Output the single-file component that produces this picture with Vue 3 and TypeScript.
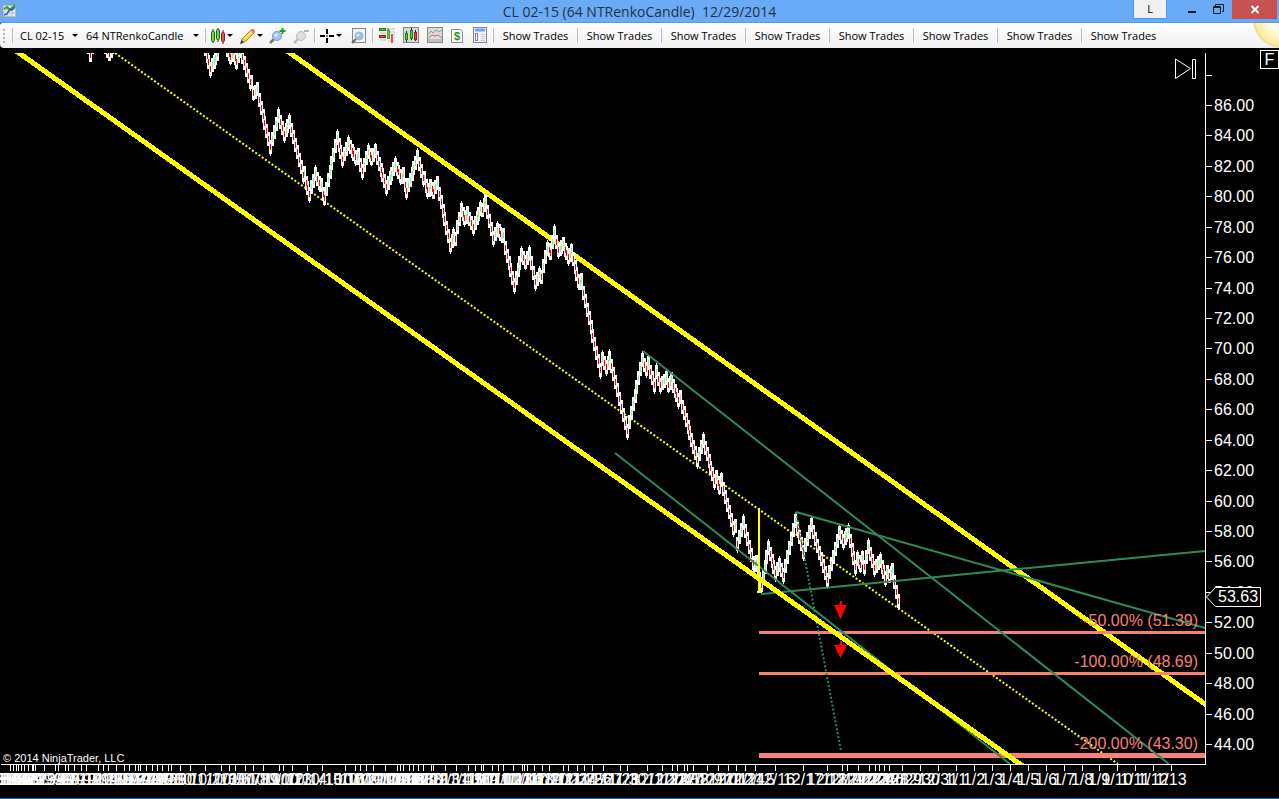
<script setup lang="ts">
type Pt = [number, number]

const title = 'CL 02-15 (64 NTRenkoCandle)\u00a0 12/29/2014'
const tradeButtons = [1, 2, 3, 4, 5, 6, 7, 8]

const runs: Pt[][] = [
  [[88, 40], [90, 62], [92, 40]],
  [[105, 40], [109, 61], [112, 40]],
  [[205, 40], [210, 78], [217, 45]],
  [
    [227, 42], [230, 65], [233, 45], [236, 70], [240, 42], [250, 91], [251, 77], [253, 101], [257, 83], [270, 156], [278, 107],
    [284, 143], [289, 113], [303, 184], [304, 168], [309, 203], [315, 165], [319, 192], [321, 182], [324, 206], [337, 129], [342, 168],
    [348, 135], [355, 166], [358, 150], [362, 180], [368, 143], [371, 166], [375, 143], [386, 196], [395, 156], [400, 185],
    [403, 169], [406, 200], [417, 148], [423, 187], [424, 173], [427, 199], [430, 180], [433, 198], [437, 176], [450, 254],
    [453, 227], [455, 245], [461, 201], [464, 227], [467, 206], [473, 236], [480, 200], [482, 215], [485, 194], [493, 247],
    [497, 221], [500, 240], [503, 232], [514, 294], [521, 246], [525, 270], [529, 245], [535, 291], [539, 266], [541, 283],
    [547, 240], [550, 259], [554, 224], [558, 259], [563, 237], [568, 266], [571, 243], [578, 290], [581, 275], [600, 379],
    [602, 350], [606, 376], [609, 349], [627, 440], [642, 351], [646, 378], [648, 356], [654, 394], [656, 363], [660, 394],
    [666, 370], [668, 393], [671, 372], [678, 409], [680, 391], [697, 469], [703, 432], [714, 490], [716, 471], [719, 495],
    [721, 472], [733, 537], [735, 520], [737, 553], [743, 514], [753, 572], [756, 557], [761, 594], [768, 539], [775, 582],
    [779, 556], [783, 584], [795, 512], [803, 561], [811, 516], [827, 589], [839, 524], [843, 550], [848, 523], [855, 576],
    [857, 550], [860, 573], [862, 550], [864, 576], [868, 538], [874, 577], [880, 552], [885, 587], [887, 565], [889, 582],
    [892, 564], [898, 610],
  ],
]

interface Bar { x: number; y: number; up: boolean }
const bars: Bar[] = []
const wicks: { x: number; y1: number; y2: number }[] = []
for (const run of runs) {
  for (let i = 0; i < run.length - 1; i++) {
    const [x0, y0] = run[i]
    const [x1, y1] = run[i + 1]
    const up = y1 < y0
    const inset = Math.min(9, Math.abs(y1 - y0) * 0.34) * (up ? -1 : 1)
    const n = Math.max(1, Math.round((x1 - x0) / 2))
    for (let k = i === 0 ? 0 : 1; k <= n; k++) {
      const t = k / n
      bars.push({ x: Math.round(x0 + (x1 - x0) * t), y: Math.round(y0 + inset + (y1 - y0 - 2 * inset) * t), up })
    }
    wicks.push({ x: x1, y1: Math.min(y1, y1 - inset), y2: Math.max(y1, y1 - inset) })
  }
}
const wickPath = wicks.map((w) => `M${w.x + 0.5} ${w.y1}V${w.y2}`).join('')
const outlinePath = bars.map((b) => `M${b.x + 0.5} ${b.y - 7}v14`).join('')
const bodyPath = (up: boolean) => bars.filter((b) => b.up === up).map((b) => `M${b.x + 0.5} ${b.y - 3}v6`).join('')

const prices = Array.from({ length: 22 }, (_, i) => ({
  label: (86 - i * 2).toFixed(2),
  y: Math.round(105 + i * 30.43),
}))

const levels = [
  { label: '-50.00% (51.39)', y: 632, h: 3 },
  { label: '-100.00% (48.69)', y: 673, h: 3 },
  { label: '-200.00% (43.30)', y: 755, h: 5 },
]

const tickXs = [
  10, 13, 16, 18, 21, 24, 28, 32, 33, 35, 44, 55, 58, 65, 68, 74, 81, 86, 98, 103, 108, 116, 124, 129, 135, 138, 140, 146, 152,
  157, 162, 168, 171, 180, 190, 205, 221, 229, 235, 245, 253, 263, 279, 283, 292, 307, 322, 345, 355, 360, 366, 373, 385, 397,
  400, 403, 409, 413, 418, 423, 431, 433, 445, 456, 468, 475, 481, 483, 492, 498, 503, 513, 522, 524, 527, 534, 542, 549, 563,
  568, 577, 584, 592, 603, 620, 627, 647, 662, 672, 677, 684, 687, 693, 707, 718, 728, 736, 745, 755, 775, 803, 827, 842, 847,
  858, 869, 875, 879, 884, 889,
]
const day = 86400000
const dates: { x: number; label: string }[] = []
const fmt = (t: number) => {
  const d = new Date(t)
  return `${d.getUTCMonth() + 1}/${d.getUTCDate()}`
}
let cursor = Date.UTC(2014, 11, 28)
for (const x of [...tickXs].reverse()) {
  dates.unshift({ x, label: fmt(cursor) })
  cursor -= day
  if (new Date(cursor).getUTCDay() === 6) cursor -= day
}
for (let i = 0; i < 16; i++) dates.push({ x: 902 + Math.round(i * 17.95), label: fmt(Date.UTC(2014, 11, 29) + i * day) })
</script>

<template>
  <div class="window">
    <header class="titlebar">
      <svg class="app-icon" width="16" height="16" viewBox="0 0 16 16">
        <rect x="1" y="2" width="13" height="12" fill="#e4e8f0" stroke="#8c93a5" />
        <path d="M1 6h13M1 10h13M5 2v12M10 2v12" stroke="#b8c0d4" />
        <path d="M2 6l3-2 3 3 5-5" fill="none" stroke="#2ba82b" stroke-width="2" />
        <path d="M2 12l3-1 3-5 2 1 3-3" fill="none" stroke="#2860b8" stroke-width="1.5" />
      </svg>
      <h1>{{ title }}</h1>
      <div class="controls">
        <button class="link-btn">L</button>
        <button class="win-btn" aria-label="Minimize">
          <svg width="26" height="19" viewBox="0 0 26 19"><path d="M8 12h8" stroke="#1e1e1e" stroke-width="2" /></svg>
        </button>
        <button class="win-btn" aria-label="Restore">
          <svg width="26" height="19" viewBox="0 0 26 19" fill="none" stroke="#1e1e1e">
            <path d="M9.500 6V4.500h8v7H16" /><path d="M7.500 6.500h7v7h-7zM7 7.500h8" />
          </svg>
        </button>
        <button class="close-btn" aria-label="Close">
          <svg width="45" height="19" viewBox="0 0 45 19"><path d="M19.500 6l7 7M26.500 6l-7 7" stroke="#fff" stroke-width="2" /></svg>
        </button>
      </div>
    </header>

    <nav class="toolbar">
      <span class="grip"></span>
      <span class="sep"></span>
      <label class="combo instrument">
        <select aria-label="Instrument"><option>CL 02-15</option></select>
        <span class="caret"></span>
      </label>
      <label class="combo interval">
        <select aria-label="Interval"><option>64 NTRenkoCandle</option></select>
        <span class="caret"></span>
      </label>
      <span class="sep"></span>
      <button class="tool menu" aria-label="Chart style">
        <svg width="16" height="16" viewBox="0 0 16 16">
          <path d="M3 1v14M8 0v14M13 2v14" stroke="#222" />
          <rect x="1.500" y="3.500" width="3" height="10" rx="1" fill="#5fe03c" stroke="#1c641c" />
          <rect x="6.500" y="1.500" width="3" height="10" rx="1" fill="#5fe03c" stroke="#1c641c" />
          <rect x="11.500" y="4.500" width="3" height="9" rx="1" fill="#f05050" stroke="#8c1919" />
        </svg>
        <span class="caret"></span>
      </button>
      <button class="tool menu" aria-label="Drawing tools">
        <svg width="16" height="16" viewBox="0 0 16 16">
          <path d="M1 15l2-5 8-8q2-1 3 0t0 3l-8 8z" fill="#ffd348" stroke="#b8821d" />
          <path d="M4 11l8-8" stroke="#fff3a1" />
          <path d="M10.500 2.500L12 1l3 3-1.500 1.500z" fill="#e87770" />
          <path d="M0 16l1.500-4 2.500 2.500z" fill="#39342d" />
        </svg>
        <span class="caret"></span>
      </button>
      <button class="tool zoom" aria-label="Zoom in">
        <svg width="18" height="16" viewBox="0 0 18 16">
          <path d="M1 15l4-4" stroke="#777" stroke-width="2.500" />
          <circle cx="8" cy="8" r="4.500" fill="#9bc9ef" stroke="#8a98a8" />
          <circle cx="7" cy="7" r="1.500" fill="#e2f3ff" />
          <path d="M13.500 0v6M10.500 3h6" stroke="#12a525" stroke-width="2" />
        </svg>
      </button>
      <button class="tool zoom" aria-label="Zoom out">
        <svg width="18" height="16" viewBox="0 0 18 16">
          <path d="M1 15l4-4" stroke="#bbb" stroke-width="2.500" />
          <circle cx="8" cy="8" r="4.500" fill="#dedede" stroke="#bdbdbd" />
          <path d="M11 3h5" stroke="#b6b6b6" stroke-width="2" />
        </svg>
      </button>
      <span class="sep"></span>
      <button class="tool menu" aria-label="Crosshair">
        <svg width="16" height="16" viewBox="0 0 16 16">
          <path d="M8 1v5M8 10v5M1 8h5M10 8h5" stroke="#000" stroke-width="2" /><path d="M7 8h2" stroke="#000" />
        </svg>
        <span class="caret"></span>
      </button>
      <button class="tool data-box" aria-label="Data box">
        <svg width="16" height="16" viewBox="0 0 16 16">
          <rect x="1.500" y=".5" width="13" height="14" fill="#f2f2f2" stroke="#888" />
          <path d="M1 15l4-4" stroke="#666" stroke-width="2" />
          <circle cx="8" cy="8" r="4" fill="#92c1ea" stroke="#a8b4c0" />
          <circle cx="7" cy="7" r="1.500" fill="#d6edff" />
        </svg>
      </button>
      <span class="sep"></span>
      <div class="panels">
        <button class="tool" aria-label="Chart trader">
          <svg width="18" height="17" viewBox="0 0 18 17">
            <path d="M10 2h7M10 5h7M10 8h7M10 11h7M10 14h7M2 6h6M2 13h6" stroke="#bbb" />
            <rect x="1.500" y="1.500" width="6" height="2" fill="#4bd22e" stroke="#247b17" />
            <rect x="1.500" y="8.500" width="6" height="2" fill="#f04040" stroke="#a81a1a" />
            <path d="M10 1v11" stroke="#165f12" />
            <rect x="9.500" y="3.500" width="2" height="8" fill="#4bd22e" stroke="#47a83a" />
            <rect x="13.500" y="7.500" width="1" height="8" fill="#f04040" stroke="#e05454" />
          </svg>
        </button>
        <button class="tool" aria-label="Data series">
          <svg width="16" height="17" viewBox="0 0 16 17">
            <rect x=".5" y=".5" width="15" height="15" fill="#d8d8d8" stroke="#888" />
            <path d="M3.500 4v11M8.500 1v12M12.500 3v11" stroke="#222" />
            <rect x="2.500" y="6.500" width="2" height="6" fill="#4bd22e" stroke="#247b17" />
            <rect x="7.500" y="3.500" width="2" height="8" fill="#4bd22e" stroke="#247b17" />
            <rect x="11.500" y="5.500" width="2" height="7" fill="#f04040" stroke="#a81a1a" />
          </svg>
        </button>
        <button class="tool" aria-label="Indicators">
          <svg width="16" height="17" viewBox="0 0 16 17">
            <rect x=".5" y=".5" width="15" height="15" fill="#dcdcdc" stroke="#888" />
            <path d="M1 12h14v3H1z" fill="#c0c0c0" />
            <path d="M1.500 7L4 4l2 2 3-3 3 2 3-2" fill="none" stroke="#56b87b" />
            <path d="M1.500 11L5 8l3 1 3-1 4 3" fill="none" stroke="#e06060" />
          </svg>
        </button>
        <button class="tool narrow" aria-label="Strategies">
          <svg width="16" height="16" viewBox="0 0 16 16">
            <path d="M2.500 1.500h9l2 2v11h-11z" fill="#fff" stroke="#8c8c8c" />
            <text x="8" y="12" text-anchor="middle" class="dollar">$</text>
          </svg>
        </button>
        <button class="tool" aria-label="Properties">
          <svg width="16" height="17" viewBox="0 0 16 17">
            <rect x="1.500" y=".5" width="13" height="15" fill="#f1f3fa" stroke="#888" />
            <path d="M3 3h10" stroke="#69a6e8" stroke-width="3" />
            <rect x="3.500" y="6.500" width="2" height="7" fill="#fff" stroke="#9a6cf0" />
            <path d="M9 7.500h4M9 9.500h4M9 11.500h4M9 13.500h4" stroke="#c7cbd8" />
          </svg>
        </button>
      </div>
      <template v-for="n in tradeButtons" :key="n">
        <span class="sep"></span>
        <button class="trades">Show Trades</button>
      </template>
      <svg class="orb" width="26" height="25" viewBox="0 0 26 25">
        <defs>
          <radialGradient id="orb-fill"><stop offset=".4" stop-color="#fffce6" /><stop offset=".9" stop-color="#fbeca0" /><stop offset="1" stop-color="#ecd483" /></radialGradient>
        </defs>
        <circle cx="29" cy="-4" r="29" fill="url(#orb-fill)" />
      </svg>
    </nav>

    <main class="chart">
      <svg class="plot" viewBox="0 48 1279 750" preserveAspectRatio="xMinYMin meet">
        <defs>
          <clipPath id="panel"><rect x="0" y="53" width="1205" height="711" /></clipPath>
        </defs>
        <g clip-path="url(#panel)">
          <g stroke="#ffff00">
            <path d="M276 43L1219 714" stroke-width="5" shape-rendering="crispEdges" />
            <path d="M115 53L1118 764" stroke-width="2" stroke-dasharray="2 2" />
          </g>
          <g fill="#fa8072" shape-rendering="crispEdges">
            <rect v-for="l in levels" :key="l.label" x="759" :y="l.y - (l.h - 1) / 2" width="446" :height="l.h" />
          </g>
          <g fill="none">
            <path :d="wickPath" stroke="#fff" />
            <path :d="outlinePath" stroke="#fff" stroke-width="3" />
            <path :d="bodyPath(true)" stroke="#90ee90" />
            <path :d="bodyPath(false)" stroke="#ff0000" />
          </g>
          <g fill="#ff0000">
            <path d="M840 601h2v4h5l-6.500 14-6.500-14h6z" />
            <path d="M840 641h2v4h5l-6.500 13-6.500-13h6z" />
          </g>
          <g stroke="#2e8b57" stroke-width="2" fill="none">
            <path d="M615 453L1010 764" />
            <path d="M643 351L1169 764" />
            <path d="M796 512L1205 628" />
            <path d="M761 594L1205 551" />
            <path d="M796 512L841 751" stroke-dasharray="2 2" />
          </g>
          <g stroke="#ffff00" fill="none" shape-rendering="crispEdges">
            <path d="M759 508V593M757 592h4" stroke-width="2" />
            <path d="M5 43L1034 774" stroke-width="5" />
          </g>
          <g class="axis-text" fill="#fa8072" text-anchor="end">
            <text v-for="l in levels" :key="l.label" x="1198" :y="l.y - 6">{{ l.label }}</text>
          </g>
          <text x="3" y="762" class="copyright">© 2014 NinjaTrader, LLC</text>
        </g>

        <g stroke="#fff" fill="none" shape-rendering="crispEdges">
          <path d="M1205.500 53V764.500H1M1206 75.500h6" />
          <path v-for="p in prices" :key="p.label" :d="`M1206 ${p.y + 0.5}h6`" />
          <path v-for="d in dates" :key="d.x" :d="`M${d.x + 0.5} 765v6`" />
        </g>
        <g class="axis-text" fill="#fff">
          <text v-for="p in prices" :key="p.label" x="1214" :y="p.y + 6">{{ p.label }}</text>
        </g>
        <path d="M1206.500 597l9-9.500h45v19h-45z" fill="#000" stroke="#fff" />
        <text x="1218" y="602" class="axis-text" fill="#fff">53.63</text>
        <g class="axis-text" fill="#fff" text-anchor="middle">
          <text v-for="d in dates" :key="d.x" :x="d.x" y="785">{{ d.label }}</text>
        </g>
      </svg>
      <button class="skip" aria-label="Go to last bar">
        <svg width="22" height="22" viewBox="0 0 22 22" fill="none" stroke="#fff"><path d="M1.500 1v19.500l15-10zM18.500 1.500h3v19h-3z" /></svg>
      </button>
      <button class="fixed">F</button>
    </main>
  </div>
</template>

<style>
html, body { margin: 0; background: #000; overflow: hidden; }
</style>

<style scoped>
.window {
  display: flex;
  flex-direction: column;
  min-height: 100vh;
  box-sizing: border-box;
  border-bottom: 1px solid #34619b;
  background: #000;
  font-family: "Open Sans", "Noto Sans", sans-serif;
}
button { margin: 0; padding: 0; border: 0; background: none; font: inherit; color: inherit; }
svg { display: block; }
.titlebar {
  display: grid;
  grid-template-columns: 1fr auto 1fr;
  align-items: start;
  height: 22px;
  background: #6aabf7;
  border-bottom: 1px solid #5a9ae0;
}
.app-icon { margin: 3px 0 0 2px; }
h1 { margin: 0; font-size: 14px; line-height: 23px; font-weight: 400; color: #26303c; white-space: pre; }
.controls { display: flex; justify-content: flex-end; padding-right: 2px; }
.link-btn {
  width: 34px;
  height: 19px;
  margin-right: 13px;
  border: 1px solid #3f9bff;
  border-top: 0;
  background: #f0f0f0;
  font-size: 11px;
  line-height: 16px;
  color: #000;
}
.win-btn { width: 26px; height: 19px; }
.close-btn { width: 45px; height: 19px; background: #c75050; }
.toolbar {
  display: flex;
  align-items: center;
  height: 25px;
  border-radius: 2px 0 0 4px;
  background: linear-gradient(#fefefe, #f0f0f0);
  font-size: 11px;
  color: #000;
  overflow: hidden;
}
.toolbar > * { flex: none; }
.grip {
  width: 2px;
  height: 14px;
  margin: 0 7px 0 3px;
  background: repeating-linear-gradient(#b4b4b4 0 2px, transparent 2px 4px);
}
.sep { width: 1px; height: 15px; background: #bdbdbd; }
.combo { display: flex; align-items: center; }
.combo select {
  flex: 1;
  min-width: 0;
  padding: 0;
  border: 0;
  appearance: none;
  background: none;
  font: inherit;
  color: inherit;
}
.instrument { width: 58px; padding: 0 7px; }
.interval { width: 113px; padding: 0 6px 0 1px; }
.caret { flex: none; border: 3px solid transparent; border-top-color: #000; border-bottom: 0; }
.tool { display: flex; align-items: center; justify-content: center; width: 23px; height: 22px; }
.tool.menu { width: 30px; gap: 1px; }
.tool.zoom { width: 24px; }
.tool.data-box { width: 27px; }
.tool.narrow { width: 20px; }
.panels { display: flex; gap: 1px; padding: 0 2px; }
.dollar { font: bold 11px "Liberation Sans", sans-serif; fill: #1e8c1e; }
.trades { width: 83px; text-align: center; white-space: nowrap; }
.orb { margin-left: auto; }
.chart { position: relative; flex: 1; display: flex; background: #000; }
.plot { width: 100%; height: auto; }
.axis-text { font: 16px "Liberation Sans", Arial, sans-serif; }
.copyright { font: 11px "Liberation Sans", Arial, sans-serif; fill: #fff; }
.skip { position: absolute; top: 10px; right: 83px; }
.fixed {
  position: absolute;
  top: 2px;
  right: 0;
  width: 19px;
  height: 19px;
  border: 1px solid #fff;
  background: #000;
  color: #fff;
  font: 16px "Liberation Sans", Arial, sans-serif;
}
</style>
